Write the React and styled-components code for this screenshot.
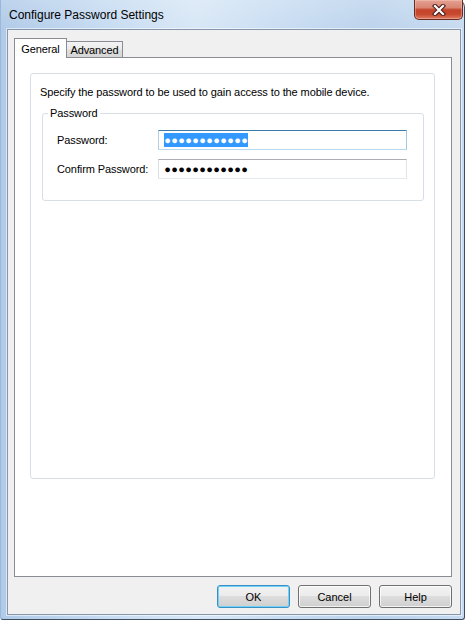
import React from 'react';
import styled, { createGlobalStyle } from 'styled-components';

const GlobalStyle = createGlobalStyle`
  html, body { margin: 0; padding: 0; background: #ffffff; }
  body {
    width: 467px;
    height: 622px;
    overflow: hidden;
    font-family: "Liberation Sans", Arial, sans-serif;
  }
  *, *::before, *::after { box-sizing: border-box; }
`;

const Window = styled.div`
  width: 465px;
  height: 620px;
  display: flex;
  flex-direction: column;
  padding: 0 3px 4px 6px;
  background:
    linear-gradient(180deg, rgba(255,255,255,0.18) 0%, rgba(255,255,255,0) 30px),
    linear-gradient(90deg, #b0cae8 0%, #c6dbf1 22%, #d8e7f6 42%, #c9ddf2 60%, #bcd3ec 80%, #c7dbf0 100%);
  border-left: 1px solid #9ab8dc;
  border-right: 1px solid #3e4d5f;
  border-bottom: 1px solid #3e4d5f;
  border-top-right-radius: 7px;
  border-bottom-left-radius: 3px;
  border-bottom-right-radius: 3px;
`;

const TitleBar = styled.div`
  height: 29px;
  display: flex;
  align-items: center;
  justify-content: space-between;
  margin-right: -3px;
  margin-left: -5px;
  padding-left: 7px;
`;

const Title = styled.span`
  font-size: 12px;
  color: #000;
  line-height: 15px;
  padding-top: 1px;
`;

const CloseButton = styled.div`
  align-self: flex-start;
  width: 49px;
  height: 20px;
  margin-right: 1px;
  display: flex;
  align-items: center;
  justify-content: center;
  border: 1px solid #6a2a20;
  border-top: none;
  border-radius: 0 0 5px 5px;
  background: linear-gradient(180deg, #e4a192 0%, #d98573 40%, #c4432b 52%, #c7482e 75%, #de7d62 100%);
  box-shadow: inset 0 0 0 1px rgba(255, 220, 210, 0.35);
`;

const ClientArea = styled.div`
  flex: 1;
  display: flex;
  flex-direction: column;
  background: #f0f0f0;
  border: 1px solid #8696ab;
  box-shadow: 0 0 0 1px rgba(255, 255, 255, 0.55);
  padding: 8px 8px 6px 6px;
`;

const TabStrip = styled.div`
  display: flex;
  align-items: flex-end;
  height: 20px;
  margin-bottom: -1px;
  position: relative;
  z-index: 1;
`;

const Tab = styled.div`
  position: relative;
  display: flex;
  align-items: center;
  justify-content: center;
  font-size: 11px;
  letter-spacing: -0.1px;
  color: #000;
  border: 1px solid #898c95;
  width: ${p => (p.$active ? 53 : 57)}px;
  height: ${p => (p.$active ? 20 : 17)}px;
  margin-left: ${p => (p.$active ? 0 : -1)}px;
  z-index: ${p => (p.$active ? 2 : 1)};
  border-bottom: ${p => (p.$active ? 'none' : '1px solid #898c95')};
  padding-top: ${p => (p.$active ? 0 : 1)}px;
  background: ${p =>
    p.$active
      ? '#ffffff'
      : 'linear-gradient(180deg, #f3f3f3 0%, #ebebeb 45%, #dddddd 55%, #d6d6d6 100%)'};
`;

const Panel = styled.div`
  flex: 1;
  background: #ffffff;
  border: 1px solid #898c95;
  padding: 15px 16px 0 15px;
  display: flex;
  flex-direction: column;
`;

const InfoBox = styled.div`
  height: 406px;
  border: 1px solid #d5dfe5;
  border-radius: 3px;
  padding: 11px 10px 0 9px;
  display: flex;
  flex-direction: column;
`;

const Intro = styled.p`
  margin: 0;
  font-size: 11px;
  letter-spacing: -0.1px;
  line-height: 15px;
  color: #000;
`;

const Group = styled.fieldset`
  margin: 6px 0 0 2px;
  padding: 0;
  min-width: 0;
  border: 1px solid #d5dfe5;
  border-radius: 3px;
`;

const GroupCaption = styled.legend`
  margin-left: 5px;
  padding: 0 2px;
  font-size: 11px;
  letter-spacing: -0.1px;
  line-height: 15px;
  color: #000;
`;

const FieldGrid = styled.div`
  display: grid;
  grid-template-columns: 101px 249px;
  row-gap: 9px;
  align-items: center;
  padding: 9px 0 21px 14px;
`;

const Label = styled.label`
  font-size: 11px;
  letter-spacing: -0.1px;
  line-height: 15px;
  color: #000;
`;

const TextBox = styled.div`
  height: 20px;
  display: flex;
  align-items: center;
  padding-left: 5px;
  background: #ffffff;
  border: 1px solid;
  border-color: ${p =>
    p.$focused
      ? '#3d7bad #a4c9e3 #b7d9ed #b5cfe7'
      : '#abadb3 #e2e3ea #e3e9ef #dbdfe6'};
`;

const Mask = styled.span`
  display: inline-flex;
  align-items: center;
  height: 14px;
  background: ${p => (p.$selected ? '#3399ff' : 'transparent')};
  color: ${p => (p.$selected ? '#ffffff' : '#000000')};
`;

const Dot = styled.span`
  display: inline-block;
  width: 7px;
  text-align: center;
  font-family: "Liberation Sans", Arial, sans-serif;
  font-size: 11px;
  line-height: 14px;
`;

const ButtonRow = styled.div`
  display: flex;
  justify-content: flex-end;
  gap: 8px;
  margin-top: 8px;
`;

const Button = styled.button`
  width: 73px;
  height: 23px;
  padding: 0;
  font-family: "Liberation Sans", Arial, sans-serif;
  font-size: 11px;
  color: #000;
  border-radius: 3px;
  border: 1px solid ${p => (p.$default ? '#3c8fc4' : '#707070')};
  background: linear-gradient(180deg, #f2f2f2 0%, #ebebeb 49%, #dddddd 50%, #cfcfcf 100%);
  box-shadow: ${p =>
    p.$default
      ? 'inset 0 0 0 1px #6fd3f7'
      : 'inset 0 0 0 1px rgba(255,255,255,0.75)'};
`;

const CloseGlyph = () => (
  <svg width="14" height="12" viewBox="0 0 14 12">
    <path d="M3 2 L11 10 M11 2 L3 10" stroke="#4a1f18" strokeWidth="4.4" strokeLinecap="square" fill="none" />
    <path d="M3 2 L11 10 M11 2 L3 10" stroke="#ffffff" strokeWidth="2.2" strokeLinecap="square" fill="none" />
  </svg>
);

const PasswordMask = ({ count, selected }) => (
  <Mask $selected={selected}>
    {Array.from({ length: count }, (_, i) => (
      <Dot key={i}>●</Dot>
    ))}
  </Mask>
);

export default function App() {
  return (
    <>
      <GlobalStyle />
      <Window>
        <TitleBar>
          <Title>Configure Password Settings</Title>
          <CloseButton>
            <CloseGlyph />
          </CloseButton>
        </TitleBar>
        <ClientArea>
          <TabStrip>
            <Tab $active>General</Tab>
            <Tab>Advanced</Tab>
          </TabStrip>
          <Panel>
            <InfoBox>
              <Intro>Specify the password to be used to gain access to the mobile device.</Intro>
              <Group>
                <GroupCaption>Password</GroupCaption>
                <FieldGrid>
                  <Label>Password:</Label>
                  <TextBox $focused>
                    <PasswordMask count={12} selected />
                  </TextBox>
                  <Label>Confirm Password:</Label>
                  <TextBox>
                    <PasswordMask count={12} />
                  </TextBox>
                </FieldGrid>
              </Group>
            </InfoBox>
          </Panel>
          <ButtonRow>
            <Button $default>OK</Button>
            <Button>Cancel</Button>
            <Button>Help</Button>
          </ButtonRow>
        </ClientArea>
      </Window>
    </>
  );
}
